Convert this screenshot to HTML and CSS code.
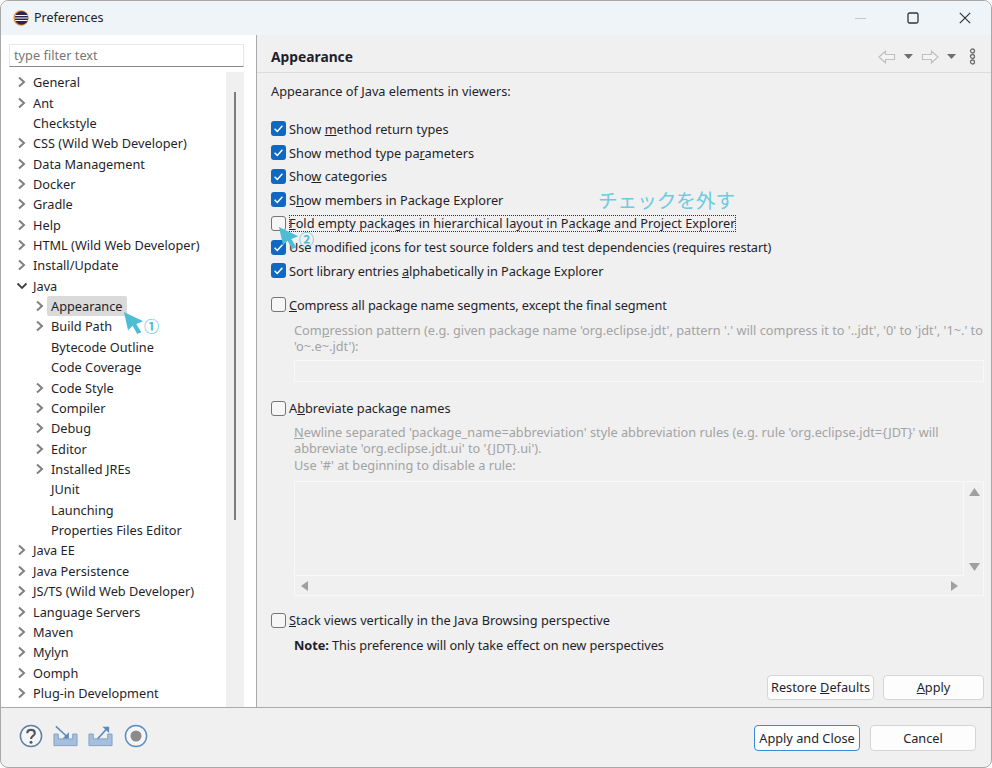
FILE: index.html
```html
<!DOCTYPE html>
<html lang="en">
<head>
<meta charset="utf-8">
<title>Preferences</title>
<link rel="stylesheet" href="styles.css">
</head>
<body>
<svg class="defs" width="0" height="0">
  <symbol id="chev" viewBox="0 0 10 12"><path d="M2 1.5 7 6 2 10.5" fill="none" stroke="#808080" stroke-width="2"/></symbol>
  <symbol id="open" viewBox="0 0 12 10"><path d="M1.5 2.5 6 7 10.5 2.5" fill="none" stroke="#404040" stroke-width="1.8"/></symbol>
  <symbol id="tick" viewBox="0 0 15 15"><rect width="15" height="15" rx="3" fill="#0f68c2"/><path d="M3.6 7.8 6.3 10.5 11.4 4.8" fill="none" stroke="#fff" stroke-width="1.5"/></symbol>
  <symbol id="cursor" viewBox="0 0 24 26"><path d="M1 1 22 11 14.5 14 20 23 15.5 25 10.5 16 5.5 21Z" fill="#4dbdd6"/></symbol>
</svg>
<div class="window">
  <header class="titlebar">
    <svg class="applogo" width="16" height="16" viewBox="0 0 18 18"><circle cx="9" cy="9" r="8.6" fill="#e8923a"/><circle cx="9.6" cy="9" r="7.6" fill="#2c2255"/><path d="M2.5 6.2h14M2 9h15M2.5 11.8h14" stroke="#fff" stroke-width="1.2"/></svg>
    <span class="wintitle">Preferences</span>
    <span class="winbtns">
      <svg width="12" height="12" viewBox="0 0 12 12"><path d="M0 6.5h11" stroke="#c4c8cc"/></svg>
      <svg width="12" height="12" viewBox="0 0 12 12"><rect x="1" y="1" width="10" height="10" rx="1.5" fill="none" stroke="#333" stroke-width="1.3"/></svg>
      <svg width="12" height="12" viewBox="0 0 12 12"><path d="M.8.8 11.2 11.2M11.2.8.8 11.2" stroke="#333" stroke-width="1.2"/></svg>
    </span>
  </header>
  <div class="body">
    <aside class="side">
      <div class="filter">type filter text</div>
      <div class="treewrap">
        <div class="tree">
          <div class="row"><svg class="tw"><use href="#chev"/></svg><span>General</span></div>
          <div class="row"><svg class="tw"><use href="#chev"/></svg><span>Ant</span></div>
          <div class="row"><i class="tw"></i><span>Checkstyle</span></div>
          <div class="row"><svg class="tw"><use href="#chev"/></svg><span>CSS (Wild Web Developer)</span></div>
          <div class="row"><svg class="tw"><use href="#chev"/></svg><span>Data Management</span></div>
          <div class="row"><svg class="tw"><use href="#chev"/></svg><span>Docker</span></div>
          <div class="row"><svg class="tw"><use href="#chev"/></svg><span>Gradle</span></div>
          <div class="row"><svg class="tw"><use href="#chev"/></svg><span>Help</span></div>
          <div class="row"><svg class="tw"><use href="#chev"/></svg><span>HTML (Wild Web Developer)</span></div>
          <div class="row"><svg class="tw"><use href="#chev"/></svg><span>Install/Update</span></div>
          <div class="row"><svg class="tw tw-open"><use href="#open"/></svg><span>Java</span></div>
          <div class="row sub"><svg class="tw"><use href="#chev"/></svg><span class="sel">Appearance</span></div>
          <div class="row sub"><svg class="tw"><use href="#chev"/></svg><span>Build Path</span></div>
          <div class="row sub"><i class="tw"></i><span>Bytecode Outline</span></div>
          <div class="row sub"><i class="tw"></i><span>Code Coverage</span></div>
          <div class="row sub"><svg class="tw"><use href="#chev"/></svg><span>Code Style</span></div>
          <div class="row sub"><svg class="tw"><use href="#chev"/></svg><span>Compiler</span></div>
          <div class="row sub"><svg class="tw"><use href="#chev"/></svg><span>Debug</span></div>
          <div class="row sub"><svg class="tw"><use href="#chev"/></svg><span>Editor</span></div>
          <div class="row sub"><svg class="tw"><use href="#chev"/></svg><span>Installed JREs</span></div>
          <div class="row sub"><i class="tw"></i><span>JUnit</span></div>
          <div class="row sub"><i class="tw"></i><span>Launching</span></div>
          <div class="row sub"><i class="tw"></i><span>Properties Files Editor</span></div>
          <div class="row"><svg class="tw"><use href="#chev"/></svg><span>Java EE</span></div>
          <div class="row"><svg class="tw"><use href="#chev"/></svg><span>Java Persistence</span></div>
          <div class="row"><svg class="tw"><use href="#chev"/></svg><span>JS/TS (Wild Web Developer)</span></div>
          <div class="row"><svg class="tw"><use href="#chev"/></svg><span>Language Servers</span></div>
          <div class="row"><svg class="tw"><use href="#chev"/></svg><span>Maven</span></div>
          <div class="row"><svg class="tw"><use href="#chev"/></svg><span>Mylyn</span></div>
          <div class="row"><svg class="tw"><use href="#chev"/></svg><span>Oomph</span></div>
          <div class="row"><svg class="tw"><use href="#chev"/></svg><span>Plug-in Development</span></div>
        </div>
        <div class="vbar"><div class="thumb"></div></div>
      </div>
    </aside>
    <main class="main">
      <div class="headbar">
        <h1 class="heading">Appearance</h1>
        <div class="nav">
          <svg width="18" height="14" viewBox="0 0 18 14"><path d="M1 7 7.5 1.2V4.5H16.5V9.5H7.5V12.8Z" fill="#f4f4f4" stroke="#c0c0c0" stroke-width="1.2"/></svg>
          <svg class="drop" width="9" height="5" viewBox="0 0 9 5"><path d="M0 0H9L4.5 5Z" fill="#6e6e6e"/></svg>
          <svg width="18" height="14" viewBox="0 0 18 14"><path d="M17 7 10.5 1.2V4.5H1.5V9.5H10.5V12.8Z" fill="#f4f4f4" stroke="#c0c0c0" stroke-width="1.2"/></svg>
          <svg class="drop" width="9" height="5" viewBox="0 0 9 5"><path d="M0 0H9L4.5 5Z" fill="#6e6e6e"/></svg>
          <svg class="menu" width="7" height="17" viewBox="0 0 7 17"><g fill="none" stroke="#707070" stroke-width="1.3"><circle cx="3.5" cy="3" r="2"/><circle cx="3.5" cy="8.5" r="2"/><circle cx="3.5" cy="14" r="2"/></g></svg>
        </div>
      </div>
      <div class="page">
        <p class="intro">Appearance of Java elements in viewers:</p>
        <div class="checks">
          <label class="check"><svg class="box"><use href="#tick"/></svg><span>Show <u>m</u>ethod return types</span></label>
          <label class="check"><svg class="box"><use href="#tick"/></svg><span>Show method type pa<u>r</u>ameters</span></label>
          <label class="check"><svg class="box"><use href="#tick"/></svg><span>Sho<u>w</u> categories</span></label>
          <label class="check"><svg class="box"><use href="#tick"/></svg><span>S<u>h</u>ow members in Package Explorer</span></label>
          <label class="check"><i class="box empty"></i><span class="focus"><u>F</u>old empty packages in hierarchical layout in Package and Project Explorer</span></label>
          <label class="check"><svg class="box"><use href="#tick"/></svg><span class="tight">Use modified <u>i</u>cons for test source folders and test dependencies (requires restart)</span></label>
          <label class="check"><svg class="box"><use href="#tick"/></svg><span class="tight-sm">Sort library entries <u>a</u>lphabetically in Package Explorer</span></label>
        </div>
        <label class="check gap-compress"><i class="box empty"></i><span class="tight"><u>C</u>ompress all package name segments, except the final segment</span></label>
        <p class="desc first">Com<u>p</u>ression pattern (e.g. given package name 'org.eclipse.jdt', pattern '.' will compress it to '..jdt', '0' to 'jdt', '1~.' to 'o~.e~.jdt'):</p>
        <div class="field"></div>
        <label class="check gap-abbr"><i class="box empty"></i><span>A<u>b</u>breviate package names</span></label>
        <p class="desc second"><u>N</u>ewline separated 'package_name=abbreviation' style abbreviation rules (e.g. rule 'org.eclipse.jdt={JDT}' will abbreviate 'org.eclipse.jdt.ui' to '{JDT}.ui').<br>Use '#' at beginning to disable a rule:</p>
        <div class="area">
          <div class="area-top">
            <div class="area-text"></div>
            <div class="area-v">
              <svg width="11" height="8" viewBox="0 0 11 8"><path d="M0 8 5.5 0 11 8Z" fill="#a0a0a0"/></svg>
              <svg width="11" height="8" viewBox="0 0 11 8"><path d="M0 0H11L5.5 8Z" fill="#a0a0a0"/></svg>
            </div>
          </div>
          <div class="area-h">
            <svg width="7" height="10" viewBox="0 0 7 10"><path d="M7 0V10L0 5Z" fill="#a0a0a0"/></svg>
            <svg width="7" height="10" viewBox="0 0 7 10"><path d="M0 0V10L7 5Z" fill="#a0a0a0"/></svg>
          </div>
        </div>
        <label class="check gap-stack"><i class="box empty"></i><span><u>S</u>tack views vertically in the Java Browsing perspective</span></label>
        <p class="note"><b>Note:</b> This preference will only take effect on new perspectives</p>
        <div class="pagebtns">
          <button class="btn restore">Restore <u>D</u>efaults</button>
          <button class="btn apply"><u>A</u>pply</button>
        </div>
      </div>
    </main>
  </div>
  <footer class="footer">
    <div class="tools">
      <svg width="24" height="24" viewBox="0 0 24 24"><circle cx="12" cy="12" r="10.6" fill="#f6f6f8" stroke="#5f7ea6" stroke-width="1.5"/><path d="M8.3 9.2C8.3 4.8 15.8 4.8 15.8 9.2 15.8 12 12 12 12 15" fill="none" stroke="#55595f" stroke-width="2.2"/><circle cx="12" cy="18.3" r="1.5" fill="#55595f"/></svg>
      <svg width="25" height="24" viewBox="0 0 26 24"><path d="M1 10V22H25V10H20.5V15H5.5V10Z" fill="#a5bfdd" stroke="#7f9fc4"/><path d="M3 2 15 13" stroke="#5b8abb" stroke-width="1.6"/><path d="M16.5 8V14.5H10Z" fill="#5b8abb"/></svg>
      <svg width="25" height="24" viewBox="0 0 26 24"><path d="M1 10V22H25V10H20.5V15H5.5V10Z" fill="#a5bfdd" stroke="#7f9fc4"/><path d="M10 15 21 3" stroke="#5b8abb" stroke-width="1.6"/><path d="M15 2.5H22V9Z" fill="#5b8abb"/></svg>
      <svg class="stop" width="24" height="24" viewBox="0 0 24 24"><circle cx="12" cy="12" r="10.6" fill="#f6f6f8" stroke="#5b8fc4" stroke-width="1.5"/><circle cx="12" cy="12" r="5.5" fill="#8b8b8b"/></svg>
    </div>
    <div class="footbtns">
      <button class="btn primary">Apply and Close</button>
      <button class="btn cancel">Cancel</button>
    </div>
  </footer>
  <svg class="pointer p1"><use href="#cursor"/></svg>
  <span class="mark m1">①</span>
  <svg class="pointer p2"><use href="#cursor"/></svg>
  <span class="mark m2">②</span>
  <span class="callout">チェックを外す</span>
</div>
</body>
</html>
```

FILE: styles.css
```css
* { box-sizing: border-box; }
html, body { margin: 0; padding: 0; background: #fff; }
body { font: 12.75px/18px "Noto Sans", "Noto Sans CJK JP", sans-serif; color: #1f1f2b; }
.defs { position: absolute; }
.window { position: relative; width: 992px; height: 768px; display: flex; flex-direction: column; background: #f0f0f0; border: 1px solid #a9a9a9; border-radius: 8px; overflow: hidden; }
.titlebar { height: 34px; flex: none; display: flex; align-items: center; background: #eff4f9; padding-left: 12px; }
.applogo { flex: none; }
.wintitle { margin-left: 5px; font-size: 12.5px; color: #222; }
.winbtns { margin-left: auto; display: flex; gap: 40px; padding-right: 20px; align-items: center; }
.body { flex: 1; display: flex; min-height: 0; }
.side { width: 256px; flex: none; background: #fff; border-right: 1px solid #a9a9a9; display: flex; flex-direction: column; padding: 9px 12px 0 8px; }
.filter { height: 23px; background: #fff; border: 1px solid #e6e6e6; border-bottom: 1px solid #8a8a8a; padding-left: 4px; color: #767676; line-height: 21px; flex: none; }
.treewrap { flex: 1; display: flex; margin-top: 5px; min-height: 0; overflow: hidden; }
.tree { flex: 1; padding-top: 0; }
.row { height: 20.37px; display: flex; align-items: center; white-space: nowrap; padding-left: 8px; }
.row.sub { padding-left: 26px; }
.tw { width: 10px; height: 12px; flex: none; margin-right: 6px; display: block; }
.tw-open { width: 12px; height: 10px; margin-left: -1px; margin-right: 5px; }
.row span { padding: 0 3px 0 0; line-height: 20px; margin-left: 0; }
.row .sel { background: #dadada; border-radius: 2px; padding: 0 4px; margin-left: -4px; }
.vbar { width: 18px; flex: none; background: #f0f0f0; padding: 20px 8px 0; }
.thumb { width: 2px; height: 428px; background: #7d7d7d; }
.main { flex: 1; min-width: 0; display: flex; flex-direction: column; }
.headbar { height: 38px; flex: none; display: flex; align-items: center; justify-content: space-between; border-bottom: 1px solid #dcdcdc; padding: 6px 15px 0 14px; }
.heading { margin: 0; font-size: 13.8px; font-weight: 700; color: #1f1f2b; }
.nav { display: flex; align-items: center; }
.nav .drop { margin: 0 8px; }
.nav .menu { margin-left: 5px; }
.page { flex: 1; padding: 9px 7px 0 14px; min-height: 0; }
.intro { margin: 0 0 17px; line-height: 18px; }
.checks { display: flex; flex-direction: column; }
.check { display: flex; align-items: center; height: 23.7px; white-space: nowrap; }
.box { width: 15px; height: 15px; flex: none; margin-right: 3px; display: block; }
.box.empty { background: #f6f6f6; border: 1.5px solid #757575; border-radius: 3px; }
.focus { outline: 1px dotted #333; outline-offset: -1px; line-height: 17px; padding-right: 1px; }
.tight { letter-spacing: -0.11px; }
.tight-sm { letter-spacing: -0.07px; }
.gap-compress { margin-top: 10px; }
.desc { margin: 0 0 0 23px; line-height: 16.4px; color: #a3a3a3; }
.desc.first { margin-top: 5px; }
.field { height: 22px; margin: 6px 0 0 23px; border: 1px solid #f8f8f8; background: #f0f0f0; }
.gap-abbr { margin-top: 14px; }
.desc.second { margin-top: 4px; }
.area { height: 115px; margin: 8px 0 0 23px; border: 1px solid #f8f8f8; display: flex; flex-direction: column; }
.area-top { flex: 1; display: flex; }
.area-text { flex: 1; border-right: 1px solid #f8f8f8; border-bottom: 1px solid #f8f8f8; }
.area-v { width: 19px; display: flex; flex-direction: column; justify-content: space-between; align-items: center; padding: 6px 0 5px 1px; }
.area-h { height: 19px; display: flex; justify-content: space-between; align-items: center; padding: 0 25px 0 6px; }
.gap-stack { margin-top: 12px; }
.note { margin: 3px 0 0 23px; line-height: 20px; letter-spacing: -0.08px; }
.pagebtns { display: flex; justify-content: flex-end; gap: 9px; margin-top: 20px; }
.btn { height: 25px; background: #fdfdfd; border: 1px solid #d5d5d5; border-radius: 4px; font: inherit; color: inherit; padding: 0; }
.restore { width: 107px; }
.apply { width: 101px; }
.footer { height: 60px; flex: none; border-top: 1px solid #a9a9a9; display: flex; justify-content: space-between; align-items: center; padding: 0 15px 0 18px; }
.tools { display: flex; gap: 10px; align-items: center; margin-top: -3px; }
.tools .stop { margin-left: 1px; }
.footbtns { display: flex; gap: 10px; margin-top: 1px; }
.primary { width: 106px; height: 26px; border: 1.5px solid #3b8ad2; }
.cancel { width: 106px; height: 26px; }
.pointer { position: absolute; width: 22px; height: 24px; }
.p1 { left: 122px; top: 310px; }
.p2 { left: 277px; top: 225px; }
.mark { position: absolute; font-family: "Noto Sans CJK JP", sans-serif; font-weight: 700; color: #4dbdd6; font-size: 15px; line-height: 16px; }
.m1 { left: 143px; top: 317px; }
.m2 { left: 298px; top: 230px; }
.callout { position: absolute; left: 597px; top: 189px; font-size: 19.6px; line-height: 22px; color: #6bcbe0; white-space: nowrap; }
```
